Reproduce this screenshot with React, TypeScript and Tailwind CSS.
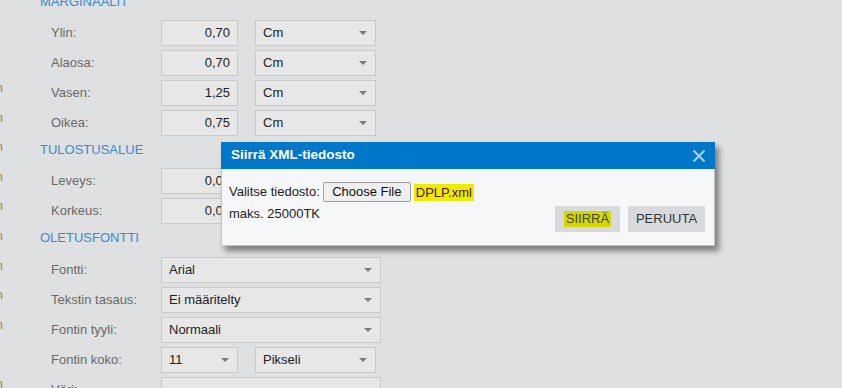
import React from 'react';

const font = "font-['Liberation_Sans',Arial,sans-serif]";

function Arrow() {
  return <span className="h-0 w-0 border-x-[4px] border-t-[4px] border-x-transparent border-t-[#7a7a7a]" />;
}

function Select({ value, width }: { value: string; width: string }) {
  return (
    <div className={`${width} flex h-[26px] items-center justify-between border border-[#c9c9c9] bg-[#e7e7e7] pl-[7px] pr-[8px] text-[13px] text-[#222]`}>
      <span>{value}</span>
      <Arrow />
    </div>
  );
}

function Input({ value }: { value: string }) {
  return (
    <div className="flex h-[26px] w-[77px] items-center justify-end border border-[#c9c9c9] bg-[#e7e7e7] pr-[7px] text-[13px] text-[#222]">
      {value}
    </div>
  );
}

function Heading({ children, h }: { children: string; h: string }) {
  return <div className={`${h} pt-[2px] text-[13px] leading-[15px] text-[#3a8bd2]`}>{children}</div>;
}

function Row({ label, children }: { label: string; children: React.ReactNode }) {
  return (
    <div className="flex h-[30px] items-start">
      <div className="flex h-[26px] w-[121px] items-center pl-[11px] text-[13px] text-[#686868]">{label}</div>
      {children}
    </div>
  );
}

function Measure({ label, value, unit }: { label: string; value: string; unit: string }) {
  return (
    <Row label={label}>
      <Input value={value} />
      <div className="ml-[17px]">
        <Select value={unit} width="w-[121px]" />
      </div>
    </Row>
  );
}

export default function App() {
  const edge = [1, 1, 1, 1, 1, 1, 1, 1, 1, 0, 1];
  return (
    <div className={`relative h-[388px] w-[842px] overflow-hidden bg-[#dfe0e2] ${font}`}>
      <div className="flex">
        <div className="flex w-[3px] flex-col pt-[73px]">
          {edge.map((on, i) => (
            <div key={i} className="flex h-[29.6px] w-[3px] items-center justify-end overflow-hidden text-[13px] text-[#a8843c]">
              {on ? <span>n</span> : null}
            </div>
          ))}
        </div>
        <div className="-mt-[8px] ml-[37px] flex flex-col">
          <Heading h="h-[28px]">MARGINAALIT</Heading>
          <Measure label="Ylin:" value="0,70" unit="Cm" />
          <Measure label="Alaosa:" value="0,70" unit="Cm" />
          <Measure label="Vasen:" value="1,25" unit="Cm" />
          <Measure label="Oikea:" value="0,75" unit="Cm" />
          <Heading h="h-[28px]">TULOSTUSALUE</Heading>
          <Measure label="Leveys:" value="0,00" unit="Cm" />
          <Measure label="Korkeus:" value="0,00" unit="Cm" />
          <Heading h="h-[29px]">OLETUSFONTTI</Heading>
          <Row label="Fontti:">
            <Select value="Arial" width="w-[220px]" />
          </Row>
          <Row label="Tekstin tasaus:">
            <Select value="Ei määritelty" width="w-[220px]" />
          </Row>
          <Row label="Fontin tyyli:">
            <Select value="Normaali" width="w-[220px]" />
          </Row>
          <Row label="Fontin koko:">
            <Select value="11" width="w-[77px]" />
            <div className="ml-[17px]">
              <Select value="Pikseli" width="w-[121px]" />
            </div>
          </Row>
          <Row label="Väri:">
            <Select value="" width="w-[220px]" />
          </Row>
        </div>
      </div>

      <div className="absolute left-[221px] top-[142px] w-[494px] shadow-[4px_5px_6px_rgba(0,0,0,0.45)]">
        <div className="flex h-[27px] items-center justify-between bg-[#0077c8] pl-[10px] pr-[9px]">
          <span className="text-[13.5px] font-bold text-white">Siirrä XML-tiedosto</span>
          <svg width="14" height="14" viewBox="0 0 14 14">
            <path d="M1.5 1.5 L12.5 12.5 M12.5 1.5 L1.5 12.5" stroke="#a9d0f0" strokeWidth="2" />
          </svg>
        </div>
        <div className="border-x border-b border-[#c4c4c4] bg-[#f6f7f9] pb-[13px] pl-[7px] pr-[9px] pt-[13px] text-[13px] text-[#222]">
          <div className="flex h-[20px] items-center">
            <span>Valitse tiedosto:</span>
            <span className="ml-[3px] flex h-[20px] w-[88px] items-center justify-center rounded-[2px] border border-[#a0a0a0] bg-[#efefef] text-[#111]">
              Choose File
            </span>
            <span className="ml-[3px] bg-[#ecec00] px-[2px] leading-[17px] text-[#5b0f00]">DPLP.xml</span>
          </div>
          <div className="mt-[4px] flex items-start justify-between">
            <span className="leading-[15px]">maks. 25000TK</span>
            <div className="flex">
              <div className="flex h-[26px] w-[65px] items-center justify-center bg-[#d9dadd]">
                <span className="bg-[#d6d600] px-[2px] leading-[16px] text-[#444]">SIIRRÄ</span>
              </div>
              <div className="ml-[8px] flex h-[26px] w-[77px] items-center justify-center bg-[#d9dadd] text-[#333]">PERUUTA</div>
            </div>
          </div>
        </div>
      </div>
    </div>
  );
}
